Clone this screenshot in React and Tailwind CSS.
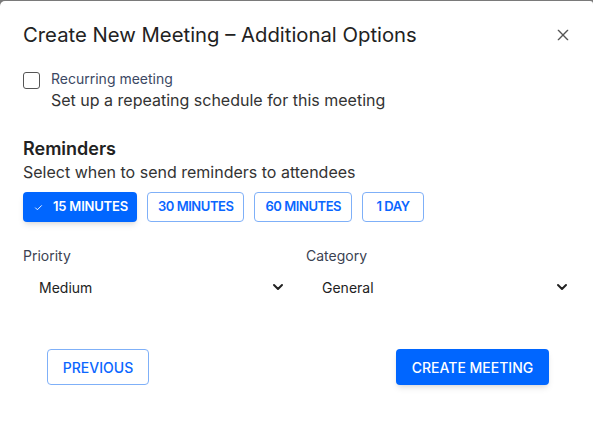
import React, { useState } from "react";

const options = ["15 MINUTES", "30 MINUTES", "60 MINUTES", "1 DAY"];

const Chevron = () => (
  <svg className="w-4 h-4 text-[#222]" fill="none" stroke="currentColor" viewBox="0 0 24 24">
    <path strokeLinecap="round" strokeLinejoin="round" strokeWidth="3" d="M6 9l6 6 6-6" />
  </svg>
);

const App = () => {
  const [selected, setSelected] = useState("15 MINUTES");
  const [recurring, setRecurring] = useState(false);

  return (
    <div className="w-[593px] h-[423px] bg-[#7a7a7a] pt-px font-['Inter',sans-serif]">
      <div className="h-[422px] bg-white rounded-tl-[5px] rounded-tr-[3px] flex flex-col">
        <div className="flex items-center justify-between pl-[23px] pr-[22px] pt-[20px]">
          <h2 className="text-[20.3px] leading-[28px] text-[#222]">
            Create New Meeting – Additional Options
          </h2>
          <button className="text-[#555]">
            <svg className="w-[16px] h-[16px]" fill="none" stroke="currentColor" viewBox="0 0 24 24">
              <path strokeLinecap="round" strokeWidth="2" d="M5 5l14 14M19 5L5 19" />
            </svg>
          </button>
        </div>

        <div className="px-[23px] pt-[20px]">
          <label className="flex items-start gap-[11px] cursor-pointer">
            <input
              type="checkbox"
              checked={recurring}
              onChange={(e) => setRecurring(e.target.checked)}
              className="mt-[3px] w-[17px] h-[17px] appearance-none border-[1.5px] border-[#555] rounded-[3px] bg-white"
            />
            <div>
              <div className="text-[14px] leading-[20px] text-[#3b4863]">Recurring meeting</div>
              <div className="text-[16px] leading-[22px] text-[#333]">
                Set up a repeating schedule for this meeting
              </div>
            </div>
          </label>

          <h3 className="mt-[26px] text-[18px] leading-[24px] font-semibold text-[#222]">Reminders</h3>
          <p className="text-[16px] leading-[22px] text-[#333]">
            Select when to send reminders to attendees
          </p>
          <div className="flex gap-[10px] mt-[9px]">
            {options.map((opt) =>
              opt === selected ? (
                <button
                  key={opt}
                  onClick={() => setSelected(opt)}
                  className="h-[30px] pl-[11px] pr-[9px] flex items-center gap-[10px] rounded-[4px] bg-[#0066ff] text-white text-[13px] font-semibold tracking-[-0.2px] shadow-md"
                >
                  <svg className="w-[9px] h-[9px]" fill="none" stroke="currentColor" viewBox="0 0 24 24">
                    <path strokeLinecap="round" strokeLinejoin="round" strokeWidth="2.5" d="M4 13l5 5L20 7" />
                  </svg>
                  {opt}
                </button>
              ) : (
                <button
                  key={opt}
                  onClick={() => setSelected(opt)}
                  className="h-[30px] min-w-[62px] px-[10px] rounded-[4px] border border-[#7fb0f8] text-[#0a66ff] text-[13px] font-semibold tracking-[-0.45px] bg-white"
                >
                  {opt}
                </button>
              )
            )}
          </div>

          <div className="grid grid-cols-[267px_1fr] gap-[16px] mt-[24px]">
            <div>
              <div className="text-[14px] leading-[20px] text-[#3b4252]">Priority</div>
              <div className="flex items-center justify-between pl-[16px] pr-[4px] h-[32px] mt-[5px]">
                <span className="text-[14px] text-[#222]">Medium</span>
                <Chevron />
              </div>
            </div>
            <div>
              <div className="text-[14px] leading-[20px] text-[#3b4252]">Category</div>
              <div className="flex items-center justify-between pl-[16px] pr-[0px] h-[32px] mt-[5px]">
                <span className="text-[14px] text-[#222]">General</span>
                <Chevron />
              </div>
            </div>
          </div>
        </div>

        <div className="flex justify-between pl-[47px] pr-[44px] mt-[46px]">
          <button className="w-[102px] h-[36px] rounded-[4px] border border-[#7fb0f8] text-[#0a66ff] text-[14px] font-medium bg-white">
            PREVIOUS
          </button>
          <button className="w-[153px] h-[36px] rounded-[4px] bg-[#0066ff] text-white text-[14px] font-medium shadow-md">
            CREATE MEETING
          </button>
        </div>
      </div>
    </div>
  );
};

export default App;
